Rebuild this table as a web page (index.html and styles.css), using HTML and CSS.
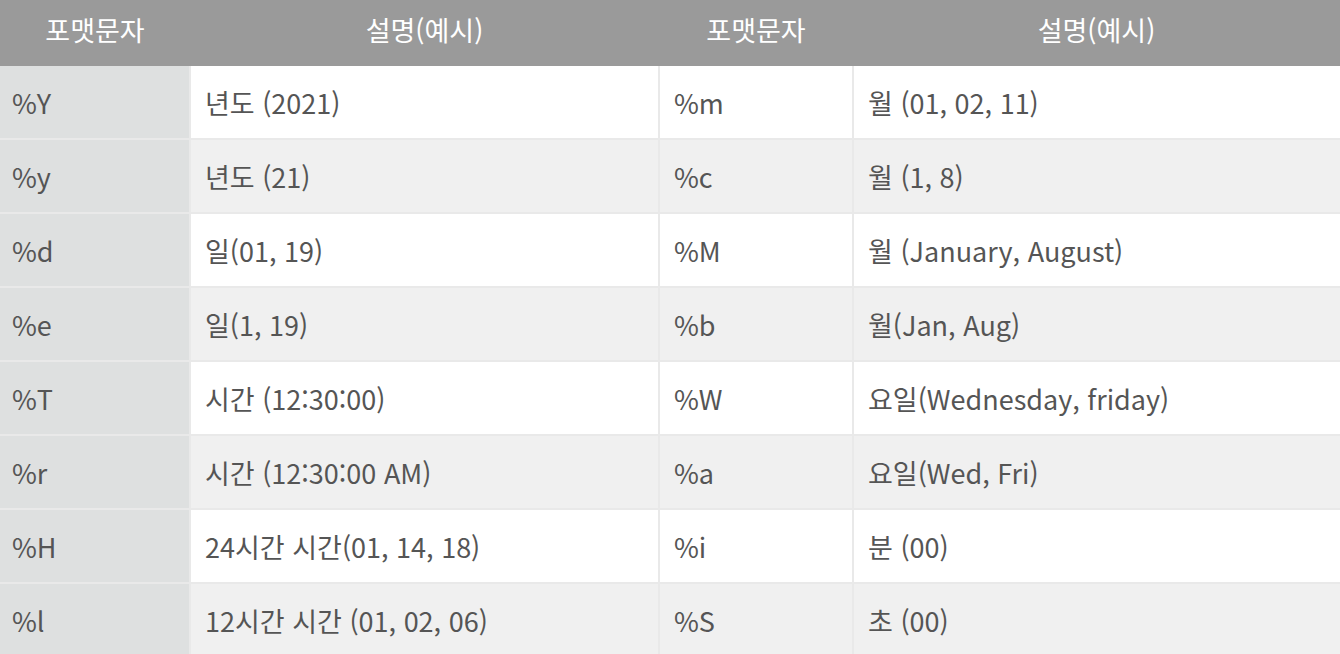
FILE: index.html
```html
<!DOCTYPE html>
<html lang="ko">
<head>
<meta charset="utf-8">
<link rel="stylesheet" href="styles.css">
</head>
<body>
<table class="fmt">
  <colgroup>
    <col class="c1"><col class="c2"><col class="c3"><col class="c4">
  </colgroup>
  <thead>
    <tr><th>포맷문자</th><th>설명(예시)</th><th>포맷문자</th><th>설명(예시)</th></tr>
  </thead>
  <tbody>
    <tr><td class="key">%Y</td><td>년도 (2021)</td><td>%m</td><td>월 (01, 02, 11)</td></tr>
    <tr><td class="key">%y</td><td>년도 (21)</td><td>%c</td><td>월 (1, 8)</td></tr>
    <tr><td class="key">%d</td><td>일(01, 19)</td><td>%M</td><td>월 (January, August)</td></tr>
    <tr><td class="key">%e</td><td>일(1, 19)</td><td>%b</td><td>월(Jan, Aug)</td></tr>
    <tr><td class="key">%T</td><td>시간 (12:30:00)</td><td>%W</td><td>요일(Wednesday, friday)</td></tr>
    <tr><td class="key">%r</td><td>시간 (12:30:00 AM)</td><td>%a</td><td>요일(Wed, Fri)</td></tr>
    <tr><td class="key">%H</td><td>24시간 시간(01, 14, 18)</td><td>%i</td><td>분 (00)</td></tr>
    <tr><td class="key">%l</td><td>12시간 시간 (01, 02, 06)</td><td>%S</td><td>초 (00)</td></tr>
  </tbody>
</table>
</body>
</html>
```
FILE: styles.css
```css
html, body {
  margin: 0;
  padding: 0;
  background: #ffffff;
}
body {
  font-family: "Noto Sans CJK KR", "Noto Sans", sans-serif;
  color: #555555;
  overflow: hidden;
}
.fmt {
  width: 1340px;
  border-collapse: collapse;
  table-layout: fixed;
}
.c1 { width: 190px; }
.c2 { width: 469px; }
.c3 { width: 194px; }
.c4 { width: 487px; }
.fmt th {
  background: #9a9a9a;
  color: #ffffff;
  font-weight: 400;
  font-size: 27px;
  height: 66px;
  padding: 0 0 8px 0;
  box-sizing: border-box;
  text-align: center;
  vertical-align: middle;
}
.fmt td {
  height: 72px;
  padding: 0 0 0 14px;
  font-size: 27px;
  border: 2px solid #e9e9e9;
  vertical-align: middle;
  text-align: left;
  white-space: nowrap;
}
.fmt thead + tbody tr:first-child td { border-top: none; }
.fmt td:first-child { border-left: none; padding-left: 12px; }
.fmt td:last-child { border-right: none; }
.fmt tbody tr:nth-child(even) td { background: #f0f0f0; }
.fmt td.key, .fmt tbody tr:nth-child(even) td.key { background: #dee0e0; }
```
